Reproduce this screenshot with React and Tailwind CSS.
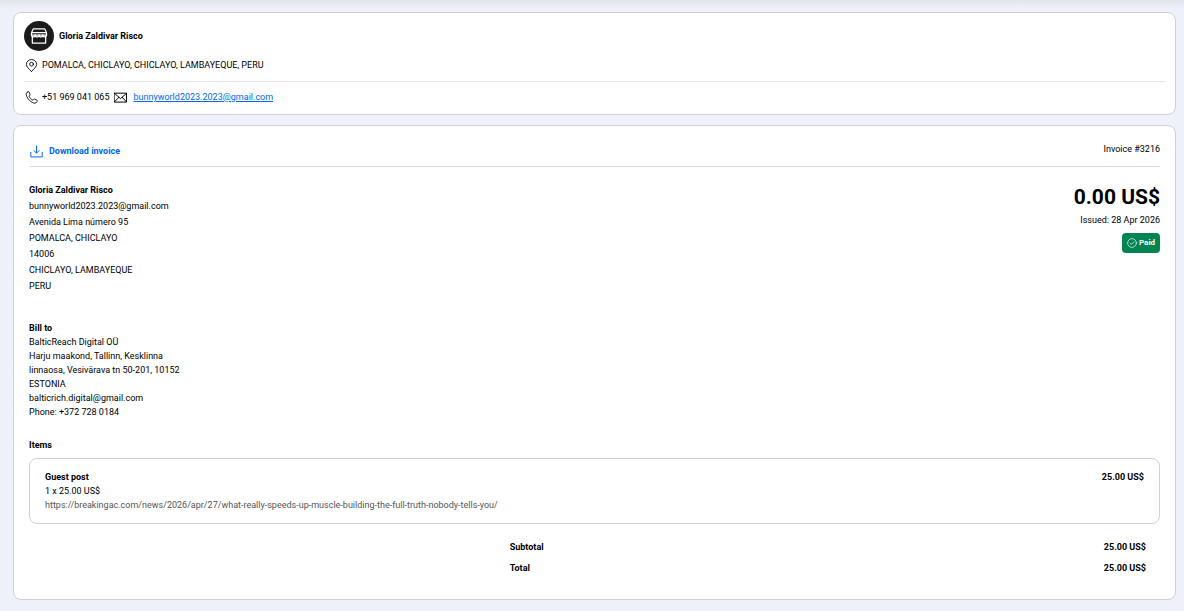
import React from 'react';

const sender = [
    'bunnyworld2023.2023@gmail.com',
    'Avenida Lima número 95',
    'POMALCA, CHICLAYO',
    '14006',
    'CHICLAYO, LAMBAYEQUE',
    'PERU',
];

const totals = [
    { label: 'Subtotal', amount: '25.00 US$' },
    { label: 'Total', amount: '25.00 US$' },
];

// Line icons share a 24x24 grid and take the text colour.
const Icon = ({ className, width = 1.8, children }) => (
    <svg className={className} viewBox="0 0 24 24" fill="none" stroke="currentColor" strokeWidth={width} strokeLinecap="round" strokeLinejoin="round" aria-hidden="true">
        {children}
    </svg>
);

const StoreIcon = () => (
    <Icon className="size-5" width={1.5}>
        <path d="M5 3.500h14L21 8v3H3V8z M3 8h18" />
        <path d="M3 10.500c0 3.500 4.500 3.500 4.500 0c0 3.500 4.500 3.500 4.500 0c0 3.500 4.500 3.500 4.500 0c0 3.500 4.500 3.500 4.500 0" />
        <path d="M4 13v7.500h16V13" />
    </Icon>
);

const PinIcon = () => (
    <Icon className="size-[13px]" width={1.6}>
        <path d="M12 23C7 18 2.500 14 2.500 9.800a9.500 8.800 0 0 1 19 0C21.500 14 17 18 12 23z" />
        <circle cx="12" cy="9.500" r="3.500" />
    </Icon>
);

const PhoneIcon = () => (
    <Icon className="size-[13px]" width={1.6}>
        <path d="M5.500 1.500 2.500 4C1 6.500 4 13 7.800 16.800s9.700 7 12.200 5.400l2.500-3c.6-1-.1-2.200-1.100-2.700l-3.200-1.500c-1-.4-1.800 0-2.400.7l-1.200 1.400C12 16 8.500 12.500 7.500 9.800l1.300-1.200c.7-.7.900-1.600.5-2.500L8 2.500C7.500 1.300 6.400.9 5.500 1.500z" />
    </Icon>
);

const MailIcon = () => (
    <Icon className="size-[13px]" width={1.8}>
        <path d="M1 4h22v16.500H1z M1 4.500l11 9.500 11-9.500 M1 20l8-8.500 M23 20l-8-8.500" />
    </Icon>
);

const DownloadIcon = () => (
    <Icon className="size-[13px]" width={1.8}>
        <path d="M12 2v12.500 M7.500 10.500 12 15l4.500-4.500 M1.500 13.500V22h21v-8.500" />
    </Icon>
);

const PaidIcon = () => (
    <Icon className="size-[10px]" width={1.6}>
        <circle cx="12" cy="12" r="10.500" />
        <path d="m7.500 12.500 3 3 6-6.500" />
    </Icon>
);

const App = () => (
    <div className="min-h-screen bg-[#eef1fa] bg-linear-to-b from-[#e2e4e9] to-[#eef1fa] to-[8px] pt-3 pr-2 pb-[11px] pl-[13px] font-['Roboto','Liberation_Sans',sans-serif] text-[9px] leading-[14px] text-black">
        {/* Merchant contact card */}
        <header className="rounded-lg border border-[#cfd1d6] bg-white px-[10px] pt-2 pb-[10px]">
            <div className="flex items-center gap-[5px]">
                <span className="flex size-[30px] items-center justify-center rounded-full bg-[#1b1b1b] text-white">
                    <StoreIcon />
                </span>
                <h1 className="font-bold">Gloria Zaldivar Risco</h1>
            </div>
            <div className="mt-[7px] flex items-center gap-1 border-b border-[#e3e4e6] pb-[9px] pl-px">
                <PinIcon />
                <span>POMALCA, CHICLAYO, CHICLAYO, LAMBAYEQUE, PERU</span>
            </div>
            <div className="flex items-center gap-1 pt-2 pl-px">
                <PhoneIcon />
                <span>+51 969 041 065</span>
                <span className="ml-px flex items-center gap-[6px]">
                    <MailIcon />
                    <a href="mailto:bunnyworld2023.2023@gmail.com" className="text-[#0066f5] underline">bunnyworld2023.2023@gmail.com</a>
                </span>
            </div>
        </header>

        {/* Invoice */}
        <main className="mt-[10px] rounded-lg border border-[#cfd1d6] bg-white px-[15px] pt-4 pb-[17px]">
            <div className="flex items-start justify-between border-b border-[#dcdde0] pb-2">
                <button type="button" className="flex items-center gap-[6px] pt-[2px] pl-px font-bold text-[#0066f5]">
                    <DownloadIcon />
                    Download invoice
                </button>
                <span>Invoice #3216</span>
            </div>

            <div className="flex items-start justify-between pt-[15px]">
                <div className="leading-4">
                    <p className="font-bold">Gloria Zaldivar Risco</p>
                    {sender.map((line) => (
                        <p key={line}>{line}</p>
                    ))}
                </div>
                <div className="flex flex-col items-end">
                    <p className="text-[21px] leading-[30px] font-bold">0.00 US$</p>
                    <p className="mt-px">Issued: 28 Apr 2026</p>
                    <span className="mt-[6px] flex h-5 items-center gap-[2px] rounded-[4px] bg-[#008552] px-[5px] text-[8px] font-bold text-white">
                        <PaidIcon />
                        Paid
                    </span>
                </div>
            </div>

            <section className="mt-[27px]">
                <h2 className="font-bold">Bill to</h2>
                <address className="not-italic">
                    BalticReach Digital OÜ<br />
                    Harju maakond, Tallinn, Kesklinna<br />
                    linnaosa, Vesivärava tn 50-201, 10152<br />
                    ESTONIA<br />
                    balticrich.digital@gmail.com<br />
                    Phone: +372 728 0184
                </address>
            </section>

            <section className="mt-[19px]">
                <h2 className="font-bold">Items</h2>
                <div className="mt-[6px] flex justify-between rounded-lg border border-[#cfd1d6] px-[15px] pt-[11px] pb-[11px]">
                    <div>
                        <h3 className="font-bold">Guest post</h3>
                        <p>1 x 25.00 US$</p>
                        <p className="text-[#545659]">https://breakingac.com/news/2026/apr/27/what-really-speeds-up-muscle-building-the-full-truth-nobody-tells-you/</p>
                    </div>
                    <span className="font-bold">25.00 US$</span>
                </div>
            </section>

            <dl className="mt-4 ml-auto w-[57.5%] pr-[14px] font-bold">
                {totals.map(({ label, amount }) => (
                    <div key={label} className="mb-[7px] flex justify-between">
                        <dt>{label}</dt>
                        <dd>{amount}</dd>
                    </div>
                ))}
            </dl>
        </main>
    </div>
);

export default App;
